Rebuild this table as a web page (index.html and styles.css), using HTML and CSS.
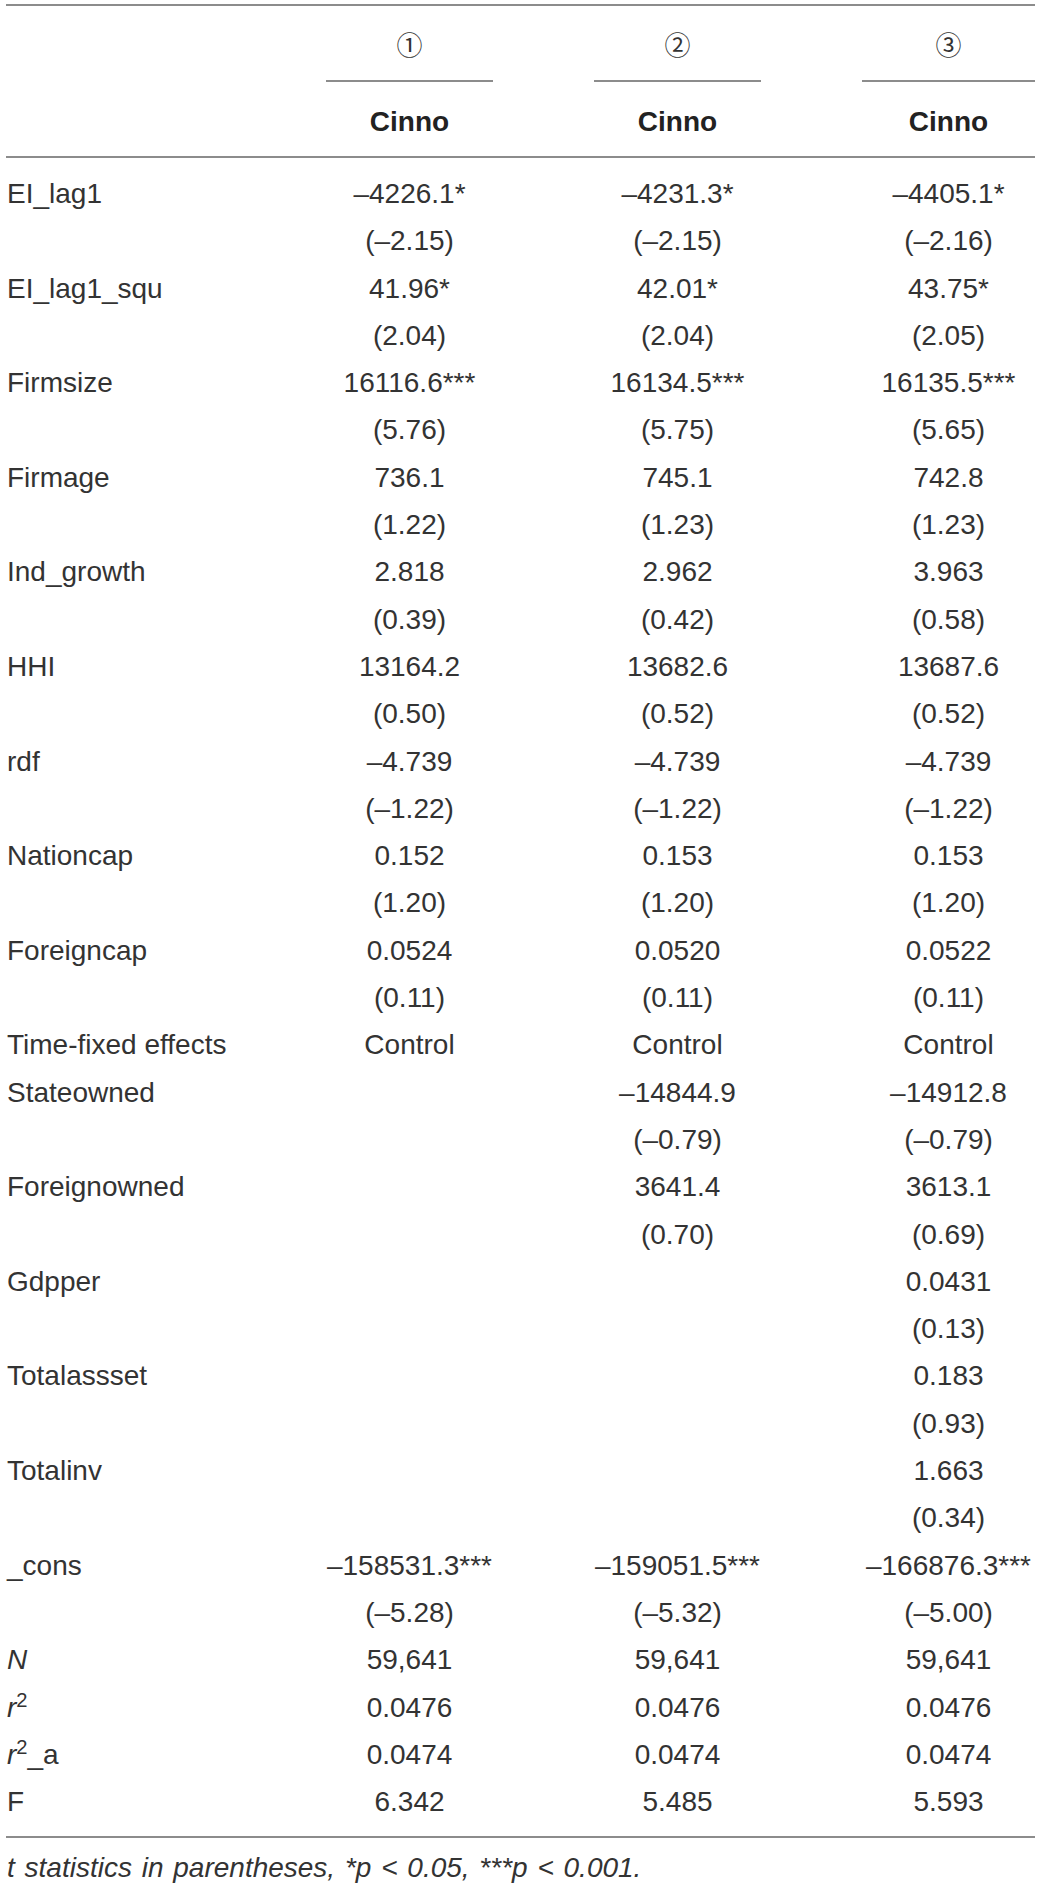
FILE: index.html
```html
<!DOCTYPE html>
<html lang="en">
<head>
  <meta charset="UTF-8" />
  <title>Regression results</title>
  <link rel="stylesheet" href="styles.css">
</head>
<body>
  <table class="reg">
    <colgroup>
      <col class="c-label">
      <col class="c-num">
      <col class="c-num">
      <col class="c-last">
    </colgroup>
    <thead>
      <tr class="model">
        <th></th>
        <th><span class="rule"><span class="circ">①</span></span></th>
        <th><span class="rule"><span class="circ">②</span></span></th>
        <th><span class="rule"><span class="circ">③</span></span></th>
      </tr>
      <tr class="dep">
        <th></th>
        <th>Cinno</th>
        <th>Cinno</th>
        <th>Cinno</th>
      </tr>
    </thead>
    <tbody>
      <tr class="first"><td>EI_lag1</td><td>–4226.1*</td><td>–4231.3*</td><td>–4405.1*</td></tr>
      <tr><td></td><td>(–2.15)</td><td>(–2.15)</td><td>(–2.16)</td></tr>
      <tr><td>EI_lag1_squ</td><td>41.96*</td><td>42.01*</td><td>43.75*</td></tr>
      <tr><td></td><td>(2.04)</td><td>(2.04)</td><td>(2.05)</td></tr>
      <tr><td>Firmsize</td><td>16116.6***</td><td>16134.5***</td><td>16135.5***</td></tr>
      <tr><td></td><td>(5.76)</td><td>(5.75)</td><td>(5.65)</td></tr>
      <tr><td>Firmage</td><td>736.1</td><td>745.1</td><td>742.8</td></tr>
      <tr><td></td><td>(1.22)</td><td>(1.23)</td><td>(1.23)</td></tr>
      <tr><td>Ind_growth</td><td>2.818</td><td>2.962</td><td>3.963</td></tr>
      <tr><td></td><td>(0.39)</td><td>(0.42)</td><td>(0.58)</td></tr>
      <tr><td>HHI</td><td>13164.2</td><td>13682.6</td><td>13687.6</td></tr>
      <tr><td></td><td>(0.50)</td><td>(0.52)</td><td>(0.52)</td></tr>
      <tr><td>rdf</td><td>–4.739</td><td>–4.739</td><td>–4.739</td></tr>
      <tr><td></td><td>(–1.22)</td><td>(–1.22)</td><td>(–1.22)</td></tr>
      <tr><td>Nationcap</td><td>0.152</td><td>0.153</td><td>0.153</td></tr>
      <tr><td></td><td>(1.20)</td><td>(1.20)</td><td>(1.20)</td></tr>
      <tr><td>Foreigncap</td><td>0.0524</td><td>0.0520</td><td>0.0522</td></tr>
      <tr><td></td><td>(0.11)</td><td>(0.11)</td><td>(0.11)</td></tr>
      <tr><td>Time-fixed effects</td><td>Control</td><td>Control</td><td>Control</td></tr>
      <tr><td>Stateowned</td><td></td><td>–14844.9</td><td>–14912.8</td></tr>
      <tr><td></td><td></td><td>(–0.79)</td><td>(–0.79)</td></tr>
      <tr><td>Foreignowned</td><td></td><td>3641.4</td><td>3613.1</td></tr>
      <tr><td></td><td></td><td>(0.70)</td><td>(0.69)</td></tr>
      <tr><td>Gdpper</td><td></td><td></td><td>0.0431</td></tr>
      <tr><td></td><td></td><td></td><td>(0.13)</td></tr>
      <tr><td>Totalassset</td><td></td><td></td><td>0.183</td></tr>
      <tr><td></td><td></td><td></td><td>(0.93)</td></tr>
      <tr><td>Totalinv</td><td></td><td></td><td>1.663</td></tr>
      <tr><td></td><td></td><td></td><td>(0.34)</td></tr>
      <tr><td>_cons</td><td>–158531.3***</td><td>–159051.5***</td><td>–166876.3***</td></tr>
      <tr><td></td><td>(–5.28)</td><td>(–5.32)</td><td>(–5.00)</td></tr>
      <tr><td><i>N</i></td><td>59,641</td><td>59,641</td><td>59,641</td></tr>
      <tr><td><i>r</i><sup>2</sup></td><td>0.0476</td><td>0.0476</td><td>0.0476</td></tr>
      <tr><td><i>r</i><sup>2</sup>_a</td><td>0.0474</td><td>0.0474</td><td>0.0474</td></tr>
      <tr class="last"><td>F</td><td>6.342</td><td>5.485</td><td>5.593</td></tr>
    </tbody>
  </table>
  <p class="note"><i>t statistics in parentheses, *p &lt; 0.05, ***p &lt; 0.001.</i></p>
</body>
</html>
```

FILE: styles.css
```css
body {
  margin: 0;
  padding: 4px 5px 0 6px;
  background: #fff;
  color: #333;
  font-family: 'Liberation Sans', Arial, sans-serif;
  font-size: 28px;
}
.reg {
  width: 1029px;
  table-layout: fixed;
  border-collapse: collapse;
  border-top: 2px solid #8c8c8c;
  border-bottom: 2px solid #8c8c8c;
}
.c-label { width: 219px; }
.c-num { width: 268px; }
.c-last { width: 274px; }
.reg th, .reg td {
  padding: 0 0 0 101px;
  text-align: center;
  font-weight: normal;
  white-space: nowrap;
}
.reg th:first-child, .reg td:first-child {
  padding-left: 1px;
  text-align: left;
}
.model th {
  height: 76px;
  vertical-align: bottom;
}
.rule {
  display: block;
  border-bottom: 2px solid #8c8c8c;
  padding-bottom: 18px;
}
.circ {
  font-family: 'DejaVu Serif', 'Liberation Serif', 'Noto Sans CJK SC', serif;
  font-size: 26px;
  line-height: 28px;
}
.dep th {
  height: 69px;
  font-weight: bold;
  color: #222;
  padding-top: 5px;
  border-bottom: 2px solid #8c8c8c;
}
.reg td {
  height: 47.3px;
  line-height: 47.3px;
}
.reg tr.first td { padding-top: 12px; }
.reg tr.last td { padding-bottom: 11px; }
sup {
  font-size: 0.72em;
  line-height: 0;
  vertical-align: 0.5em;
}
.note {
  margin: 14px 0 0 1px;
  font-size: 28px;
  line-height: 32px;
  word-spacing: 2px;
}
```
